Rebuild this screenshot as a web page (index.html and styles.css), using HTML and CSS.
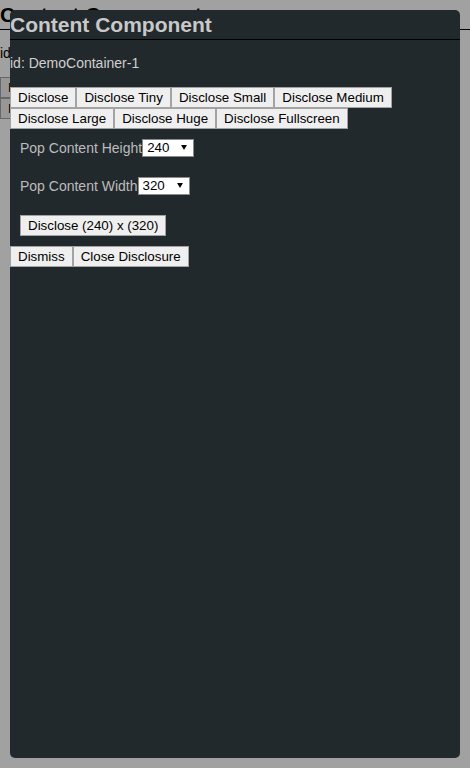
FILE: index.html
```html
<!DOCTYPE html>
<html>
<head>
<meta charset="utf-8">
<title>Content Component</title>
<link rel="stylesheet" href="styles.css">
</head>
<body>
<div class="comp comp--light">
  <h2 class="comp__title">Content Component</h2>
  <p class="comp__id">id: DemoContainer-1</p>
  <div class="btnrow">
    <button class="btn">Disclose</button><button class="btn">Disclose Tiny</button><button class="btn">Disclose Small</button><button class="btn">Disclose Medium</button><button class="btn">Disclose Large</button><button class="btn">Disclose Huge</button><button class="btn">Disclose Fullscreen</button>
  </div>
</div>
<div class="overlay"></div>
<div class="modal">
  <div class="comp comp--dark">
    <h2 class="comp__title">Content Component</h2>
    <p class="comp__id">id: DemoContainer-1</p>
    <div class="btnrow">
      <button class="btn">Disclose</button><button class="btn">Disclose Tiny</button><button class="btn">Disclose Small</button><button class="btn">Disclose Medium</button><button class="btn">Disclose Large</button><button class="btn">Disclose Huge</button><button class="btn">Disclose Fullscreen</button>
    </div>
    <div class="settings">
      <div class="field">
        <span class="field__label">Pop Content Height</span>
        <span class="select-wrap">
          <select class="select"><option>240</option><option>120</option><option>480</option></select>
          <svg class="select-arrow" width="7" height="6" viewBox="0 0 7 6"><path d="M0 0H7L3.5 6Z" fill="#000"/></svg>
        </span>
      </div>
      <div class="field">
        <span class="field__label">Pop Content Width</span>
        <span class="select-wrap">
          <select class="select"><option>320</option><option>160</option><option>640</option></select>
          <svg class="select-arrow" width="7" height="6" viewBox="0 0 7 6"><path d="M0 0H7L3.5 6Z" fill="#000"/></svg>
        </span>
      </div>
      <div class="field field--action">
        <button class="btn">Disclose (240) x (320)</button>
      </div>
    </div>
    <div class="btnrow">
      <button class="btn">Dismiss</button><button class="btn">Close Disclosure</button>
    </div>
  </div>
</div>
</body>
</html>
```

FILE: styles.css
```css
html, body {
  margin: 0;
  padding: 0;
  height: 100%;
}

body {
  background: #ffffff;
  font-family: "Liberation Sans", Arial, sans-serif;
  overflow: hidden;
  position: relative;
}

.comp {
  color: #000;
}

.comp__title {
  margin: 0;
  padding: 0;
  font-size: 21px;
  font-weight: bold;
  line-height: 29px;
  border-bottom: 1px solid #000;
  white-space: nowrap;
}

.comp__id {
  margin: 15px 0 16px;
  font-size: 14px;
  line-height: 16px;
}

.btnrow {
  display: flex;
  flex-wrap: wrap;
  align-items: flex-start;
}

.btn {
  box-sizing: border-box;
  height: 21px;
  margin: 0;
  padding: 2px 7px;
  font-family: "Liberation Sans", Arial, sans-serif;
  font-size: 13.333px;
  line-height: 15px;
  color: #000;
  background: #efefef;
  border: 1px solid #a3a3a3;
  border-radius: 0;
  white-space: nowrap;
}

.overlay {
  position: absolute;
  inset: 0;
  background: rgba(0, 0, 0, 0.37);
}

.modal {
  position: absolute;
  left: 10px;
  top: 10px;
  width: 450px;
  height: 748px;
  background: #22292d;
  border-radius: 5px;
  overflow: hidden;
}

.comp--dark .comp__title {
  color: #c8c8c8;
}

.comp--dark .comp__id {
  color: #d0d0d0;
}

.settings {
  display: flex;
  flex-direction: column;
  align-items: flex-start;
  gap: 20px;
  padding: 10px;
}

.field {
  display: flex;
  align-items: center;
  height: 18px;
  font-size: 14px;
  color: #bcbcbc;
}

.field--action {
  height: auto;
}

.field__label {
  line-height: 16px;
}

.select-wrap {
  position: relative;
  display: inline-block;
  height: 18px;
}

.select {
  -webkit-appearance: none;
  appearance: none;
  box-sizing: border-box;
  display: block;
  width: 52px;
  height: 18px;
  margin: 0;
  padding: 0 4px;
  font-family: "Liberation Sans", Arial, sans-serif;
  font-size: 13.333px;
  line-height: 16px;
  color: #000;
  background: #fff;
  border: 1px solid #8a8a8a;
  border-radius: 0;
}

.select-arrow {
  position: absolute;
  right: 7px;
  top: 6px;
  width: 6px;
  height: 5px;
  pointer-events: none;
}
```
